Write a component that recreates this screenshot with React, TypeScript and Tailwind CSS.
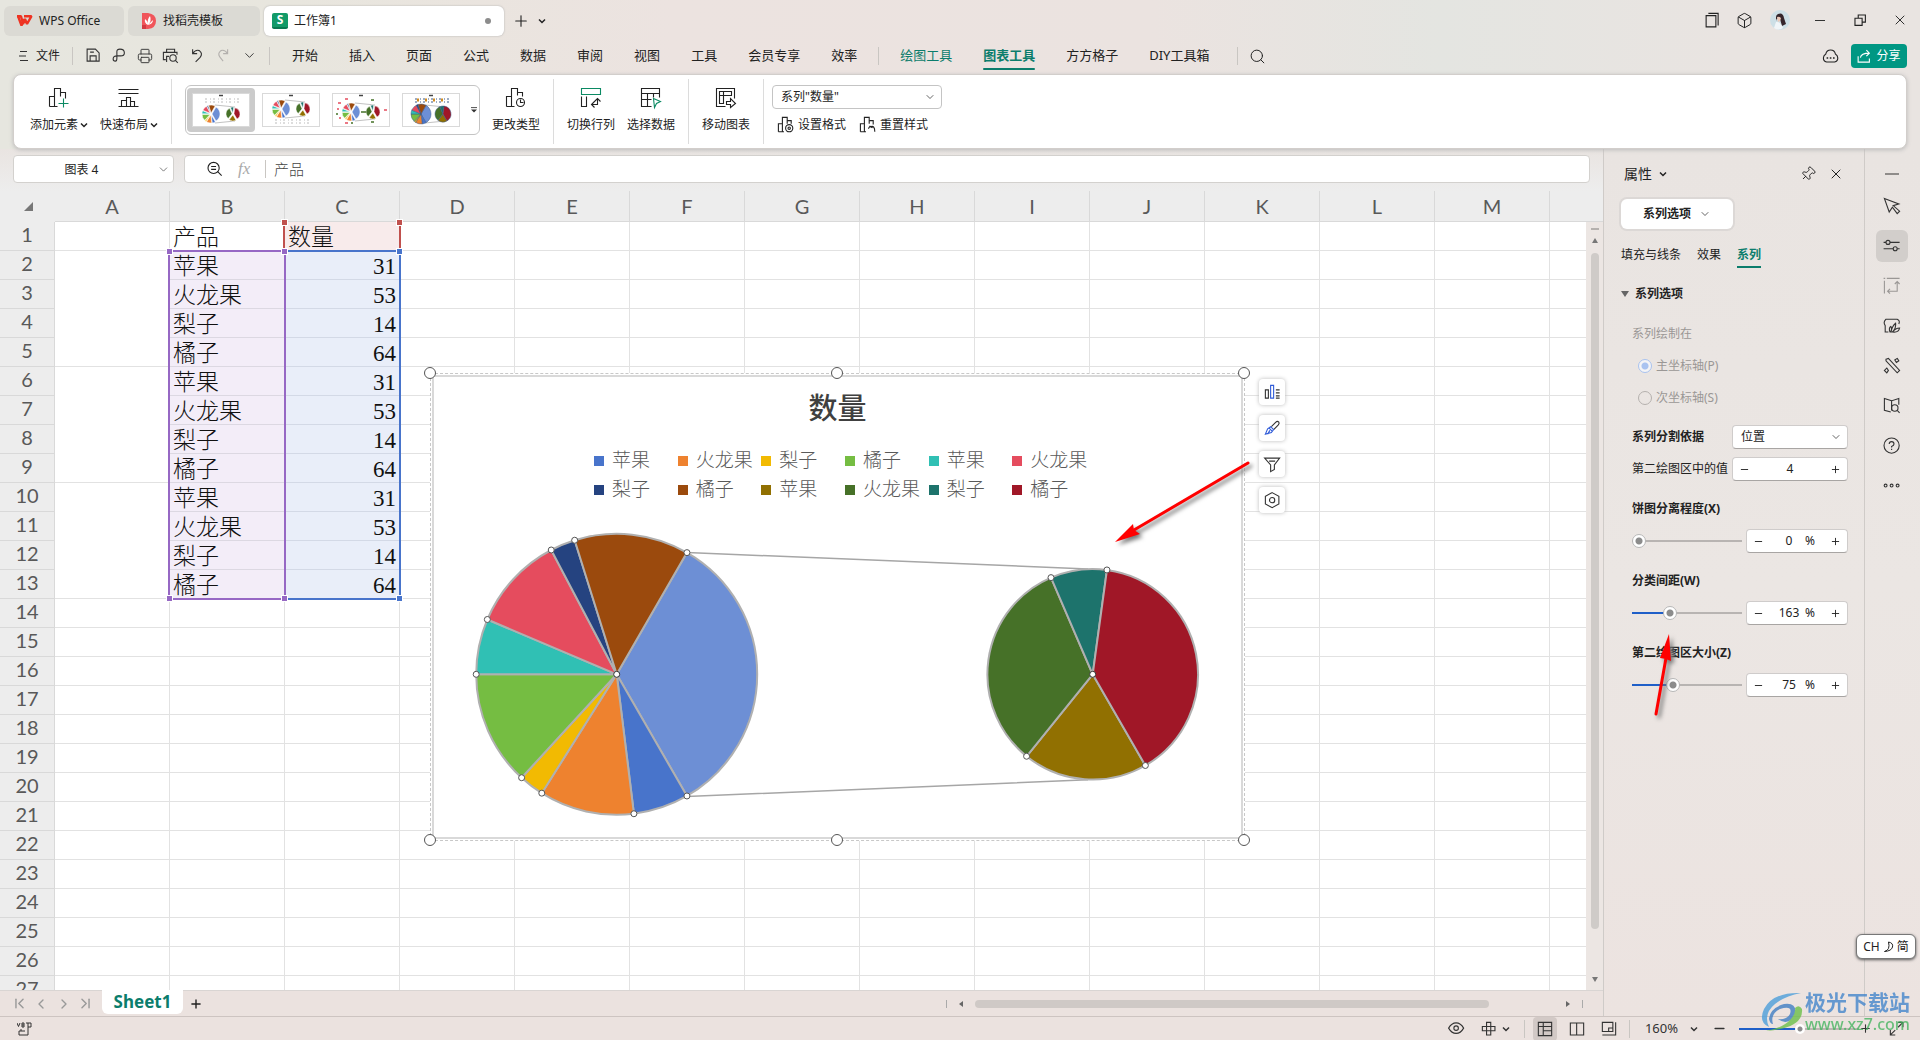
import type { ReactNode } from "react";
import { Box, Printer, Search, Pin, X, Minus, Plus, ChevronDown, ChevronLeft, ChevronRight, ChevronFirst, ChevronLast } from "lucide-react";

interface SliceProps {
    value: number,
    color: string,
}

interface SliderProps {
    id: string,
    label: string,
    value: number,
    min: number,
    max: number,
}

const products = ['苹果', '火龙果', '梨子', '橘子'];
const amounts = [31, 53, 14, 64];
const columns = ['A', 'B', 'C', 'D', 'E', 'F', 'G', 'H', 'I', 'J', 'K', 'L', 'M', ''];
const palette = ['#4874cb', '#ee822f', '#f2ba02', '#75bd42', '#30c0b4', '#e54c5e', '#254380', '#9b4a0d', '#917001', '#467128', '#1d736c', '#a01727'];

const mainSlices: SliceProps[] = [
    { value: 162, color: '#6d8fd5' },
    ...palette.slice(0, 8).map((color, i) => ({ value: amounts[i % 4], color })),
];
const secondSlices: SliceProps[] = palette.slice(8).map((color, i) => ({ value: amounts[i], color }));

const point = (cx: number, cy: number, r: number, deg: number) => {
    const a = (deg - 90) * Math.PI / 180;
    return [cx + r * Math.cos(a), cy + r * Math.sin(a)];
}

const Pie = ({ cx, cy, r, start, slices, line, dots, explode = 0 }: { cx: number, cy: number, r: number, start: number, slices: SliceProps[], line: string, dots?: boolean, explode?: number }) => {
    const total = slices.reduce((sum, el) => sum + el.value, 0);
    let angle = start;
    const parts = slices.map((el) => {
        const from = angle;
        angle += el.value / total * 360;
        const mid = point(0, 0, explode, (from + angle) / 2);
        return { color: el.color, mid, a: point(cx, cy, r, from), b: point(cx, cy, r, angle), big: angle - from > 180 ? 1 : 0 };
    });

    return (
        <g>
            {parts.map((p, i) => (
                <path key={i} fill={p.color} stroke={line} strokeWidth={dots ? 2 : 0.5} transform={`translate(${p.mid[0]} ${p.mid[1]})`}
                    d={`M${cx} ${cy}L${p.a[0]} ${p.a[1]}A${r} ${r} 0 ${p.big} 1 ${p.b[0]} ${p.b[1]}Z`} />
            ))}
            {dots && parts.map((p, i) => <circle key={i} cx={p.a[0]} cy={p.a[1]} r="3" fill="#fff" stroke="#555" />)}
            {dots && <circle cx={cx} cy={cy} r="3" fill="#fff" stroke="#333" />}
        </g>
    )
}

const Icon = ({ size = 20, children }: { size?: number, children: ReactNode }) => (
    <svg width={size} height={size} viewBox="0.5 0.5 20 20" fill="none" stroke="currentColor" strokeWidth={22 / size} className="shrink-0 overflow-visible">
        {children}
    </svg>
)

const Bars = () => <path d="M1 19V9H6M6 19V1H12V9M1 19H8" />

const Caret = ({ className = "" }: { className?: string }) => (
    <svg width="8" height="6" viewBox="0 0 8 6" fill="none" stroke="currentColor" strokeWidth="1.5" className={className}>
        <path d="M1 1.5L4 4.5L7 1.5" />
    </svg>
)

const TitleBar = () => {
    return (
        <div className="h-[38px] pt-1.5 pl-1 flex shrink-0 items-start text-xs">
            <button className="w-[120px] h-[30px] mr-1 pl-3 rounded-md bg-[#dbdad4] flex items-center gap-1.5">
                <svg width="17" height="12" viewBox="0 0 17 12" fill="none" stroke="#ee3322" strokeWidth="2.4" strokeLinejoin="bevel">
                    <path d="M1 1.2H5L7 9L9 4L11 9L15.5 1.2H8" /><path d="M2 1L5.5 10.5L8 4" />
                </svg>
                WPS Office
            </button>
            <button className="w-[132px] h-[30px] mr-1 pl-[13px] rounded-md bg-[#dbdad4] flex items-center gap-[7px]">
                <svg width="15" height="16" viewBox="0 0 15 16">
                    <path d="M1 0H7Q15 1 15 8T7 16H1Z" fill="#f0555a" /><path d="M1 12H5V16H1Z" fill="#d23a42" />
                    <path d="M7 12Q3 10 4 6Q7 8 7 12Q6 6 9 3Q11 8 7 12Q12 11 12 7" fill="#fff" />
                </svg>
                找稻壳模板
            </button>
            <button className="w-60 h-[30px] pl-2 pr-[13px] rounded-md bg-white shadow-[0_0_2px_#aaa] flex items-center gap-1.5">
                <span className="w-4 h-4 rounded-xs bg-[#129a68] border-b-2 border-[#0a7850] text-white text-xs leading-[14px] font-bold">S</span>
                工作簿1
                <span className="ml-auto w-1.5 h-1.5 rounded-full bg-[#8c8c8c]" />
            </button>
            <button aria-label="新建" className="h-[30px] ml-2 w-4"><Plus size={18} strokeWidth={1.5} /></button>
            <button aria-label="更多标签" className="h-[30px] ml-2.5 w-4"><Caret /></button>
            <div className="ml-auto h-7 flex items-center">
                <button aria-label="窗口" className="w-8 flex justify-center"><Icon size={15}><path d="M2 4H15V19H2ZM5 1H18V17" /></Icon></button>
                <button aria-label="应用" className="w-8 flex justify-center"><Box size={17} strokeWidth={1.4} /></button>
                <button aria-label="账户" className="w-10 flex justify-center">
                    <svg width="20" height="20" viewBox="0 0 20 20">
                        <circle cx="10" cy="10" r="10" fill="#cddfe6" />
                        <path d="M8 4Q13 2 14 8L16 14L12 16L10 9L8 8Q6 9 6 11L6 7Q6 5 8 4Z" fill="#35262c" />
                        <path d="M7 7Q9 6 11 8L10 11L8 12Z" fill="#eac8b8" /><path d="M6 12Q10 11 13 18Q8 21 4 18Z" fill="#f0f5f8" />
                    </svg>
                </button>
                <button aria-label="最小化" className="w-10 flex justify-center"><span className="w-2.5 h-px bg-[#333]" /></button>
                <button aria-label="还原" className="w-10 flex justify-center"><Icon size={13}><path d="M2 7H13V18H2ZM7 7V2H18V13H13" /></Icon></button>
                <button aria-label="关闭" className="w-10 flex justify-center"><X size={16} strokeWidth={1.4} /></button>
            </div>
        </div>
    )
}

const Sep = () => <span className="w-px h-[18px] bg-[#c9c6c2]" />

const MenuBar = () => {
    const tabs = ['开始', '插入', '页面', '公式', '数据', '审阅', '视图', '工具', '会员专享', '效率'];

    return (
        <nav className="h-9 pr-[13px] flex shrink-0 items-center text-[13px]">
            <button className="pl-[19px] pr-3 flex items-center gap-2 text-xs">
                <svg width="9" height="12" viewBox="0 0 9 12" stroke="#333"><path d="M1 1.5H8M0 6H7M1 10.5H9" /></svg>
                文件
            </button>
            <Sep />
            <div className="ml-[7px] mr-[7px] flex text-[#333]">
                <button aria-label="保存" className="w-[26px] flex justify-center"><Icon size={15}><path d="M2 2H13L18 7V18H2ZM6 18V11H14V18M6 6H11" /></Icon></button>
                <button aria-label="输出" className="w-[26px] flex justify-center"><Icon size={15}><path d="M7 14V5Q7 2 11 2Q17 2 17 7Q17 11 12 11H7Q2 11 2 15Q2 18 5 18Q7 18 7 14" /></Icon></button>
                <button aria-label="打印" className="w-[26px] flex justify-center"><Printer size={16} strokeWidth={1.4} /></button>
                <button aria-label="打印预览" className="w-[26px] flex justify-center"><Icon size={16}><path d="M5 6V2H15V6M4 15H1V6H18V9M5 18V11H8" /><circle cx="13" cy="13" r="4" /><path d="M16 16L19 19" /></Icon></button>
                <button aria-label="撤销" className="w-[26px] flex justify-center"><Icon size={15}><path d="M4 2V8H10M4 8Q8 2 13 4Q18 8 14 13L8 19" /></Icon></button>
                <button aria-label="恢复" className="w-[26px] flex justify-center text-[#b3b0ad]"><Icon size={15}><path d="M16 2V8H10M16 8Q12 2 7 4Q2 8 6 13L10 18" /></Icon></button>
                <button aria-label="更多" className="w-[26px] flex justify-center"><ChevronDown size={15} strokeWidth={1.5} /></button>
            </div>
            <Sep />
            <div className="ml-[22px] mr-[21px] flex gap-[31px]">
                {tabs.map((el) => <button key={el}>{el}</button>)}
            </div>
            <Sep />
            <div className="ml-[21px] mr-7 flex gap-[31px] text-[#222]">
                <button className="text-[#0b7d6c]">绘图工具</button>
                <button className="relative font-bold text-[#0b7d6c]">图表工具<span className="absolute left-0 -bottom-1 w-full h-0.5 rounded bg-[#0b7d6c]" /></button>
                <button>方方格子</button>
                <button>DIY工具箱</button>
            </div>
            <Sep />
            <button aria-label="搜索" className="ml-[11px]"><Search size={17} strokeWidth={1.4} /></button>
            <button aria-label="云" className="ml-auto mr-3">
                <Icon size={16}><path d="M5 18Q1 17 1 13Q1 10 4 8Q5 3 10 3Q15 3 16 8Q19 10 19 13Q19 17 15 18Z" /><path d="M5 13H7M9 13H11M13 13H15" strokeWidth="2" /></Icon>
            </button>
            <button className="w-14 h-6 rounded bg-[#009783] text-white text-xs flex items-center justify-center gap-1">
                <Icon size={15}><path d="M2 10V18H17V13M5 12Q6 6 17 6M13 2L17 6L13 10" /></Icon>
                分享
            </button>
        </nav>
    )
}

const RibbonButton = ({ label, caret, children }: { label: string, caret?: boolean, children: ReactNode }) => {
    return (
        <button className="pt-[13px] flex flex-col items-center gap-2 text-xs leading-[18px]">
            <Icon>{children}</Icon>
            <span className="flex items-center whitespace-nowrap">{label}{caret && <Caret className="ml-0.5" />}</span>
        </button>
    )
}

const RibbonLine = () => <span className="mx-px my-1 w-px self-stretch bg-[#dcdcdc]" />

const Thumb = ({ kind }: { kind: number }) => {
    const labelY = kind === 1 ? 25 : 4;
    const line = kind === 3 ? '#3a5a8a' : '#fff';
    const dy = kind === 1 ? -2 : kind === 2 ? 1 : 3;
    return (
        <button aria-label={`样式${kind + 1}`} className={`w-[68px] h-11 flex items-center justify-center rounded ${kind === 0 ? 'bg-[#cbcbcb]' : ''}`}>
            <svg width="56" height="32" viewBox="0 0 56 32" className="bg-white outline outline-[#d9d9d9]">
                <path d="M26 1.5H30" stroke="#444" strokeWidth="1.5" />
                {kind !== 2 && <path d={`M12 ${labelY + 1}H46M12 ${labelY + 4}H46`} stroke={kind === 3 ? '#3a5a8a' : '#bbb'} strokeWidth="1.2" strokeDasharray="2 3 1 2" />}
                {kind === 3 && <path d="M14 6H44" stroke="#d08a20" strokeWidth="3" strokeDasharray="2 6" />}
                <path d={`M22 ${8 + dy}L42 ${10 + dy}M22 ${26 + dy}L42 ${24 + dy}`} stroke="#999" strokeWidth="0.6" />
                <Pie cx={18} cy={17 + dy} r={kind === 3 ? 10 : 8} start={30} slices={mainSlices} line={line} explode={kind === 3 ? 0 : 1} />
                <Pie cx={40} cy={17 + dy} r={kind === 3 ? 8 : 6} start={150} slices={secondSlices} line={line} explode={kind === 3 ? 0 : 1} />
                {kind === 2 && <path d="M5 9H8M4 15H6M6 24H8M12 29H15M12 5H15M51 16H54" stroke="#e54c5e" strokeWidth="1.5" />}
                {kind === 2 && <path d="M3 20H5M28 18H33M18 29H20M38 6H41M38 28H41" stroke="#467128" strokeWidth="1.5" />}
            </svg>
        </button>
    )
}

const Ribbon = () => {
    return (
        <section className="relative z-10 h-[75px] mx-[13px] pl-4 flex shrink-0 rounded-lg bg-white border border-[#d2cecb] shadow-[0_1px_4px_#bbb] text-[#222]">
            <div className="flex gap-3">
                <RibbonButton label="添加元素" caret><path d="M1 19V9H6M6 19V1H12V9M12 5H17V11M1 19H9" /><path d="M15 11V20M10 16H20" stroke="#0b8a63" /></RibbonButton>
                <RibbonButton label="快速布局" caret><path d="M0 2H20M0 6H20M0 19H20M3 19V13H8M8 19V10H12V19M12 14H16V19" /></RibbonButton>
                <RibbonLine />
                <div className="mt-2.5 w-[295px] h-[50px] pl-px flex items-center gap-0.5 rounded-md border border-[#c4c4c4]">
                    <Thumb kind={0} />
                    <Thumb kind={1} />
                    <Thumb kind={2} />
                    <Thumb kind={3} />
                    <button aria-label="更多样式" className="ml-1">
                        <svg width="6" height="6" viewBox="0 0 7 7"><path d="M0 .7H7" stroke="#333" /><path d="M0 3H7L3.500 6.500Z" fill="#333" /></svg>
                    </button>
                </div>
                <RibbonButton label="更改类型"><path d="M1 19V9H6M6 19V1H12V8M12 5H17V9M1 19H9" /><circle cx="15" cy="15" r="4" /><path d="M15 12V15H18" /></RibbonButton>
                <RibbonLine />
                <RibbonButton label="切换行列"><path d="M1 1H20V7H1Z" stroke="#0b8a63" /><path d="M1 9V19H6V9M11 17H17V11M14 14L17 11L20 14M14 14L11 17L14 20" /></RibbonButton>
                <RibbonButton label="选择数据"><path d="M11 19H1V1H19V10M1 6H19M1 12H11M7 6V19M13 6V10" /><path d="M13 11L20 14L16 16L14 20Z" stroke="#0b8a63" /></RibbonButton>
                <RibbonLine />
                <RibbonButton label="移动图表"><path d="M10 19H1V1H19V11M4 4H16V8H4ZM4 8V16H8V4M11 14H15V11L20 16L15 20V17H11Z" /></RibbonButton>
            </div>
            <span className="ml-[13px] my-1 w-px bg-[#dcdcdc]" />
            <div className="ml-2 pt-2.5 text-xs">
                <div className="relative">
                    <select aria-label="图表元素" className="w-[170px] h-6 pl-2 appearance-none rounded border border-[#c4c4c4] bg-white">
                        <option>系列"数量"</option>
                    </select>
                    <ChevronDown size={12} strokeWidth={1.4} className="absolute right-1.5 top-1.5" />
                </div>
                <div className="mt-2 pl-1.5 flex gap-3.5">
                    <button className="flex items-center gap-1"><Icon size={16}><Bars /><path d="M12 5H17V9" /><circle cx="14.500" cy="14.500" r="4.500" /><circle cx="14.500" cy="14.500" r="1.500" /></Icon>设置格式</button>
                    <button className="flex items-center gap-1"><Icon size={16}><Bars /><path d="M12 5H17V10M11 15L13 12L16 14M13 13Q19 10 19 19" /></Icon>重置样式</button>
                </div>
            </div>
        </section>
    )
}

const FormulaBar = () => {
    return (
        <div className="h-[42px] pb-0.5 px-[13px] flex items-center gap-2.5 shrink-0 bg-linear-to-b from-transparent to-[#ededed]">
            <div className="relative">
                <input aria-label="名称框" defaultValue="图表 4" className="w-[161px] h-7 pr-6 rounded border border-[#d3d1ce] bg-white text-center text-xs" />
                <ChevronDown size={13} strokeWidth={1.4} className="absolute right-1 top-2 text-[#555]" />
            </div>
            <div className="flex-1 h-7 pl-[23px] flex items-center rounded border border-[#d3d1ce] bg-white">
                <Icon size={14}><circle cx="8.500" cy="9" r="8" /><path d="M5 7H12M5 11H12M14 14L20 20" /></Icon>
                <span className="w-[43px] pl-4 font-['Liberation_Serif'] italic text-[17px] leading-7 text-[#aaa]">fx</span>
                <Sep />
                <input aria-label="编辑栏" defaultValue="产品" className="ml-2 flex-1 text-[15px] font-light text-[#444] leading-6" />
            </div>
        </div>
    )
}

const handles = [
    "-left-[7px] -top-[7px]", "left-[400px] -top-[7px]", "-right-1.5 -top-[7px]",
    "-left-[7px] -bottom-1.5", "left-[400px] -bottom-1.5", "-right-1.5 -bottom-1.5",
];

const Chart = () => {
    return (
        <div className="absolute left-[430px] top-[182px] w-[815px] h-[468px] border border-dashed border-[#c8c8c8] bg-white">
            <div className="absolute inset-[1px] border-2 border-[#d9d9d9]" />
            <div className="relative pt-3 text-center text-[29px] leading-[44px] font-medium text-[#404040]">数量</div>
            <div className="relative mt-4 ml-[163px] w-[502px] grid grid-cols-6 text-[19px] leading-[29px] font-light text-[#595959] whitespace-nowrap">
                {palette.map((color, i) => (
                    <span key={color} className="flex items-center gap-2">
                        <i className="w-2.5 h-2.5 shrink-0" style={{ backgroundColor: color }} />
                        {products[i % 4]}
                    </span>
                ))}
            </div>
            <svg width="813" height="466" viewBox="431 374 813 466" className="absolute left-0 top-0">
                <path d="M687 552.500L1088 569M687 796.500L1088 779.800" stroke="#a6a6a6" strokeWidth="1.500" />
                <Pie cx={616.7} cy={674.3} r={140.5} start={30} slices={mainSlices} line="#b0b0b0" dots />
                <Pie cx={1092.7} cy={674.3} r={105.3} start={150} slices={secondSlices} line="#b0b0b0" dots />
            </svg>
            {handles.map((el) => <i key={el} className={`absolute w-3 h-3 rounded-full border border-[#555] bg-white ${el}`} />)}
            <div className="absolute left-[828px] top-[5px] flex flex-col gap-2.5 text-[#333]">
                {[
                    <g><path d="M1 7H5V18H1ZM15 7H20M15 11H20M15 15H20M15 18H20" /><path d="M8 1H12V18H8Z" stroke="#2f5bd8" /></g>,
                    <g><path d="M9 8L15 2Q17 0 19 2Q20 4 18 6L12 12" /><path d="M1 18L4 11L8 8L12 12L9 16ZM6 10L10 14M4 18L7 13" stroke="#2f5bd8" /></g>,
                    <g><path d="M0 2H20L13 11V17L8 20V11ZM6 6H14" /></g>,
                    <g><path d="M10 0L19 5V15L10 20L1 15V5Z" /><circle cx="10" cy="10" r="3.500" /></g>,
                ].map((el, i) => (
                    <button key={i} aria-label={`图表按钮${i + 1}`} className="w-[26px] h-[26px] flex items-center justify-center rounded bg-white shadow-[0_0_4px_#bbb]"><Icon size={15}>{el}</Icon></button>
                ))}
            </div>
        </div>
    )
}

const Corner = ({ className }: { className: string }) => <i className={`absolute w-[7px] h-[7px] border border-white ${className}`} />

const Sheet = () => {
    return (
        <div className="relative flex-1 min-h-0 flex overflow-hidden bg-white">
            <div className="relative flex-1 min-w-0 overflow-hidden">
                <table className="w-[1665px] table-fixed border-separate border-spacing-0 text-[#111]">
                    <thead>
                        <tr className="h-[31px] bg-[#ededed] font-[Lato] text-xl text-[#595959]">
                            <th className="w-[55px] p-0 border-b border-[#ededed]">
                                <svg width="9" height="9" viewBox="0 0 9 9" className="ml-6"><path d="M9 0V9H0Z" fill="#777" /></svg>
                            </th>
                            {columns.map((el, i) => <th key={i} className="w-[115px] p-0 font-normal leading-7 border-b border-r border-[#d9d9d9]">{el}</th>)}
                        </tr>
                    </thead>
                    <tbody>
                        {Array.from({ length: 27 }, (_, r) => (
                            <tr key={r} className="h-[29px]">
                                <th className="p-0 bg-[#ededed] border-b border-r border-[#d9d9d9] font-[Lato] font-normal text-xl leading-6 align-top text-[#595959]">{r + 1}</th>
                                {columns.map((_, c) => {
                                    const inData = r > 0 && r < 13;
                                    if (c === 0 && inData) {
                                        return r % 4 === 1 ? <td key={c} rowSpan={4} className="border-b border-r border-[#e2e2e2]" /> : null;
                                    }
                                    if (c === 1 && r < 13) {
                                        return <td key={c} className={`px-[3px] py-0 border-b border-r border-[#dcd8e2] font-light text-[23px] leading-7 ${inData ? 'bg-[#f3edf8]' : ''}`}>{inData ? products[(r - 1) % 4] : '产品'}</td>;
                                    }
                                    if (c === 2 && r < 13) {
                                        return inData
                                            ? <td key={c} className="px-[3px] pt-1 pb-0 border-b border-r border-[#d3d9e6] bg-[#e9eef9] text-right font-['Liberation_Serif'] text-[23px] leading-6">{amounts[(r - 1) % 4]}</td>
                                            : <td key={c} className="px-[3px] py-0 border-b border-r border-[#e2e2e2] bg-[#f8ebeb] font-light text-[23px] leading-7">数量</td>;
                                    }
                                    return <td key={c} className="p-0 border-b border-r border-[#e2e2e2]" />;
                                })}
                            </tr>
                        ))}
                    </tbody>
                </table>
                {/* source ranges of the selected series */}
                <div className="absolute left-[283px] top-8 w-[118px] h-7 border-x-2 border-[#c0504d]" />
                <div className="absolute left-[284px] top-[59px] w-[117px] h-[350px] border-2 border-[#4874cb]" />
                <div className="absolute left-[168px] top-[59px] w-[118px] h-[350px] border-2 border-[#9668c4]" />
                <Corner className="left-[281px] top-7 bg-[#c0504d]" />
                <Corner className="left-[396px] top-7 bg-[#c0504d]" />
                <Corner className="left-[166px] top-[57px] bg-[#9668c4]" />
                <Corner className="left-[281px] top-[57px] bg-[#9668c4]" />
                <Corner className="left-[396px] top-[57px] bg-[#4874cb]" />
                <Corner className="left-[166px] top-[404px] bg-[#9668c4]" />
                <Corner className="left-[281px] top-[404px] bg-[#9668c4]" />
                <Corner className="left-[396px] top-[404px] bg-[#4874cb]" />
                <Chart />
            </div>
            <div className="w-[17px] flex flex-col items-center bg-[#ece6e3]">
                <div className="w-full h-[31px] bg-[#ededed] border-b border-[#d9d9d9]" />
                <span className="mt-1.5 w-2 h-0.5 bg-[#b5b1ae]" />
                <span className="mt-2 border-x-[3px] border-x-transparent border-b-[5px] border-b-[#777]" />
                <span className="mt-2.5 w-2 flex-1 rounded bg-[#cfcbc8]" />
                <span className="mt-12 mb-2 border-x-[3px] border-x-transparent border-t-[5px] border-t-[#777]" />
            </div>
        </div>
    )
}

const SheetTabs = () => {
    return (
        <div className="h-[26px] flex shrink-0 border-t border-[#d9d5d3] bg-[#ebe2df]">
            <div className="w-[102px] pl-[11px] flex items-center text-[#999]">
                <button aria-label="第一个" className="w-[22px]"><ChevronFirst size={17} strokeWidth={2} /></button>
                <button aria-label="上一个" className="w-[23px]"><ChevronLeft size={16} strokeWidth={2} /></button>
                <button aria-label="下一个" className="w-[21px]"><ChevronRight size={16} strokeWidth={2} /></button>
                <button aria-label="最后一个" className="w-[18px]"><ChevronLast size={17} strokeWidth={2} /></button>
            </div>
            <button className="w-[81px] h-6 -mt-px rounded-b-md bg-white text-[17px] leading-6 font-bold text-[#0b7d6c]">Sheet1</button>
            <button aria-label="新建工作表" className="ml-0.5 px-1"><Plus size={14} strokeWidth={2.4} /></button>
            <div className="ml-auto w-[657px] pr-5 flex items-center">
                <span className="w-px h-2 bg-[#aaa]" />
                <span className="mx-3 border-y-[3px] border-y-transparent border-r-[4px] border-r-[#666]" />
                <span className="w-[514px] h-2 rounded bg-[#cfc9c6]" />
                <span className="ml-auto border-y-[3px] border-y-transparent border-l-[4px] border-l-[#666]" />
                <span className="ml-3 w-px h-2 bg-[#aaa]" />
            </div>
        </div>
    )
}

const box = "h-6 rounded border border-[#cfcccb] border-b-[#a8a5a3] bg-white";

const Stepper = ({ id, label, value, unit }: { id?: string, label?: string, value: number, unit?: string }) => {
    return (
        <div className={`${box} ${unit ? 'w-[102px]' : 'w-[116px]'} px-1.5 flex items-center justify-between text-xs`}>
            <button aria-label="减少"><Minus size={11} strokeWidth={2} /></button>
            <span className="flex items-center">
                <input id={id} aria-label={label} defaultValue={value} className="w-[26px] text-center" />
                {unit && <span className="w-4 text-center">{unit}</span>}
            </span>
            <button aria-label="增加"><Plus size={11} strokeWidth={2} /></button>
        </div>
    )
}

const SliderField = ({ id, label, value, min, max }: SliderProps) => {
    const done = (value - min) / (max - min) * 100;

    return (
        <div className="mt-[18px]">
            <label htmlFor={id} className="block leading-5 font-bold">{label}</label>
            <div className="mt-2.5 flex items-center justify-between">
                <input id={id} type="range" min={min} max={max} defaultValue={value}
                    className="w-[110px] h-3.5 appearance-none bg-no-repeat bg-center bg-[length:100%_2px] [&::-webkit-slider-thumb]:appearance-none [&::-webkit-slider-thumb]:w-3.5 [&::-webkit-slider-thumb]:h-3.5 [&::-webkit-slider-thumb]:rounded-full [&::-webkit-slider-thumb]:border [&::-webkit-slider-thumb]:border-[#b8b8b8] [&::-webkit-slider-thumb]:bg-[radial-gradient(circle,#8c8c8c_3px,#fff_4px)]"
                    style={{ backgroundImage: `linear-gradient(90deg, #1f5fc8 ${done}%, #b8b4b2 ${done}%)` }} />
                <Stepper label={label} value={value} unit="%" />
            </div>
        </div>
    )
}

const Panel = () => {
    return (
        <aside className="w-[261px] pl-[17px] pr-4 shrink-0 border-l border-[#cfcbc8] text-xs text-[#222]">
            <div className="h-[50px] pl-[3px] flex items-center">
                <button className="flex items-center gap-[7px] text-sm">属性<Caret /></button>
                <button aria-label="固定" className="ml-auto"><Pin size={16} strokeWidth={1.4} className="rotate-45" /></button>
                <button aria-label="关闭面板" className="ml-3 mr-1"><X size={16} strokeWidth={1.5} /></button>
            </div>
            <button className="w-28 h-[30px] flex items-center justify-center gap-2 rounded-md bg-white shadow-[0_0_0_2px_#dcd8d6] font-semibold">
                系列选项<ChevronDown size={12} strokeWidth={1.4} />
            </button>
            <div className="mt-4 flex gap-4 leading-5">
                <button>填充与线条</button>
                <button>效果</button>
                <button className="relative font-bold text-[#0b7d6c]">系列<span className="absolute left-0 -bottom-[3px] w-full h-0.5 bg-[#0b7d6c]" /></button>
            </div>
            <button className="mt-[19px] mb-px flex items-center gap-1.5 leading-5 font-bold">
                <span className="border-x-[4px] border-x-transparent border-t-[6px] border-t-[#666]" />系列选项
            </button>
            <fieldset disabled className="mt-5 pl-[11px] text-[#9a9795]">
                <legend className="leading-5">系列绘制在</legend>
                <label className="mt-3 pl-1.5 flex items-center gap-1 leading-5">
                    <input type="radio" name="axis" defaultChecked className="w-3.5 h-3.5 appearance-none rounded-full border border-[#a9c3f0] bg-[radial-gradient(circle,#a9c3f0_3px,#f4f4f6_4px)]" />主坐标轴(P)
                </label>
                <label className="mt-3 pl-1.5 flex items-center gap-1 leading-5">
                    <input type="radio" name="axis" className="w-3.5 h-3.5 appearance-none rounded-full border border-[#b5b1ae]" />次坐标轴(S)
                </label>
            </fieldset>
            <div className="mt-[17px] pl-[11px]">
                <div className="flex items-center justify-between">
                    <label htmlFor="split" className="font-bold">系列分割依据</label>
                    <div className="relative">
                        <select id="split" className={`${box} w-[116px] pl-2 appearance-none`}><option>位置</option></select>
                        <ChevronDown size={12} strokeWidth={1.4} className="absolute right-1.5 top-1.5" />
                    </div>
                </div>
                <div className="mt-2 flex items-center justify-between">
                    <label htmlFor="second">第二绘图区中的值</label>
                    <Stepper id="second" value={4} />
                </div>
                <SliderField id="explode" label="饼图分离程度(X)" value={0} min={0} max={400} />
                <SliderField id="gap" label="分类间距(W)" value={163} min={0} max={500} />
                <SliderField id="size" label="第二绘图区大小(Z)" value={75} min={5} max={200} />
            </div>
        </aside>
    )
}

const SideBar = () => {
    const tools = [
        <path d="M1 1L19 8L12 10L20 17L17 20L11 12L7 18Z" />,
        <g><path d="M0 6H3M8 6H20M0 14H12M17 14H20" /><circle cx="5.500" cy="6" r="2.500" /><circle cx="14.500" cy="14" r="2.500" /></g>,
        <path d="M1 4V20M0 1H2M4 1H20M5 17H17V5M14 8L17 5L20 8M8 14L5 17L8 20" />,
        <path d="M6 18H2V10Q-1 6 3 2H17Q21 4 19 8M8 18Q6 13 9 11Q11 14 9 18Q11 10 15 7Q16 13 11 18Q15 13 20 13Q19 19 11 18Z" />,
        <path d="M3 2L6 1L20 16L17 19L3 4ZM17 1L19 4L16 6L14 3ZM4 13L6 16L4 19L1 16Z" />,
        <g><path d="M10 4L1 1V16L9 18M10 16V4L19 1V9" /><circle cx="14" cy="13" r="4" /><path d="M17 16L20 19" /></g>,
        <g><circle cx="10" cy="10" r="9.500" /><path d="M7 8Q7 5 10 5T13 8Q13 10 10 11V12.500M10 14V15.500" /></g>,
        <g><circle cx="2.500" cy="10" r="1.800" /><circle cx="10" cy="10" r="1.800" /><circle cx="17.500" cy="10" r="1.800" /></g>,
    ];

    return (
        <div className="w-14 pr-0.5 shrink-0 border-l border-[#cfcbc8] flex flex-col items-center text-[#333]">
            <span className="mt-6 mb-[15px] w-3.5 h-0.5 bg-[#8f8c8a]" />
            {tools.map((el, i) => (
                <button key={i} aria-label={`工具${i + 1}`} className={`w-8 h-8 mb-2 flex items-center justify-center rounded-md ${i === 1 ? 'bg-[#d2cecb]' : ''} ${i === 2 ? 'text-[#9a9795]' : ''}`}>
                    <Icon size={16}>{el}</Icon>
                </button>
            ))}
        </div>
    )
}

const StatusBar = () => {
    return (
        <footer className="h-6 px-4 shrink-0 flex items-center border-t border-[#cdc4c1] text-[13px] text-[#333]">
            <svg width="15" height="14" viewBox="0 0 15 14" fill="none" stroke="currentColor" className="ml-px">
                <path d="M0 1L1.500 4.500L3 1M5 1V5H7V1ZM5 3H7M9 1H14V5H11V13H2V9H8M11 5V1M4 7V9" />
            </svg>
            <button aria-label="护眼" className="ml-auto mr-[18px]"><Icon size={15}><path d="M0 10Q4 3 10 3T20 10Q16 17 10 17T0 10Z" /><circle cx="10" cy="10" r="3" /></Icon></button>
            <button aria-label="阅读" className="mr-[14px] flex items-center gap-1.5"><Icon size={14}><path d="M7 7V1H13V7H19V13H13V19H7V13H1V7ZM7 7H13V13H7Z" /></Icon><Caret /></button>
            <Sep />
            <button aria-label="普通" className="ml-2 w-6 h-6 flex items-center justify-center rounded bg-[#d2c9c6]"><Icon size={14}><path d="M1 1H20V20H1ZM1 7H20M8 1V20M8 13H20" /></Icon></button>
            <button aria-label="分页" className="ml-2 w-6 h-6 flex items-center justify-center"><Icon size={14}><path d="M1 2H20V19H1ZM10 2V19" /></Icon></button>
            <button aria-label="页面" className="ml-2 mr-2 w-6 h-6 flex items-center justify-center"><Icon size={14}><path d="M1 1H16V14H1ZM20 1V19H1M10 14V9H16" /></Icon></button>
            <Sep />
            <button className="ml-[15px] flex items-center gap-3">160%<Caret /></button>
            <button aria-label="缩小" className="ml-3.5"><Minus size={15} strokeWidth={2.4} /></button>
            <input type="range" aria-label="缩放" min={0} max={100} defaultValue={51}
                className="ml-3 w-[120px] h-2.5 appearance-none bg-no-repeat bg-center bg-[length:100%_2px] bg-[linear-gradient(90deg,#1f5fc8_50%,#bdb6b3_50%)] [&::-webkit-slider-thumb]:appearance-none [&::-webkit-slider-thumb]:w-2.5 [&::-webkit-slider-thumb]:h-2.5 [&::-webkit-slider-thumb]:rounded-full [&::-webkit-slider-thumb]:bg-[radial-gradient(circle,#8c8c8c_2px,#fff_3px)]" />
            <button aria-label="放大"><Plus size={13} strokeWidth={2} /></button>
            <button aria-label="全屏" className="ml-[18px]"><Icon size={14}><path d="M12 1H19V8M19 1L12 8M8 19H1V12M1 19L8 12" /></Icon></button>
        </footer>
    )
}

const Watermark = () => {
    return (
        <div className="absolute right-2.5 bottom-1.5 flex items-center gap-0.5 opacity-80 pointer-events-none">
            <svg width="42" height="40" viewBox="0 0 42 40">
                <path d="M40 1Q12 0 3 17Q-3 30 8 35Q2 22 14 12Q24 4 40 1Z" fill="#4d9fdb" />
                <path d="M12 32Q9 22 19 17Q32 13 29 22Q26 28 17 27Q26 34 34 24Q37 10 23 12Q9 16 8 27Q9 32 12 32Z" fill="#3f7fc4" />
                <path d="M41 17Q43 36 5 39Q22 36 30 27Q35 21 34 16Q38 12 41 17Z" fill="#6cc04a" />
            </svg>
            <div>
                <div className="text-[21px] leading-6 font-bold text-[#4486cc]">极光下载站</div>
                <div className="text-base leading-5 font-medium text-[#48b562]">www.xz7.com</div>
            </div>
        </div>
    )
}

const App = () => {
    return (
        <div className="relative h-screen flex flex-col overflow-hidden bg-[linear-gradient(90deg,#e6e6df_0%,#e8e6de_15%,#ece3e0_35%,#ebe3e0_60%,#e4e5e1_75%,#e9e4e1_90%,#e9e4e1_100%)] font-['Noto_Sans','Noto_Sans_CJK_SC',sans-serif] text-[#222]">
            <TitleBar />
            <MenuBar />
            <Ribbon />
            <main className="flex-1 min-h-0 flex bg-[linear-gradient(180deg,#e9e4e1,#ebe6e3_50%,#ece3e0)]">
                <div className="flex-1 min-w-0 flex flex-col">
                    <FormulaBar />
                    <Sheet />
                    <SheetTabs />
                </div>
                <Panel />
                <SideBar />
            </main>
            <div className="shrink-0 bg-[#ebe2df]"><StatusBar /></div>
            <svg width="150" height="100" viewBox="1110 450 150 100" className="absolute left-[1110px] top-[450px] pointer-events-none drop-shadow-[3px_3px_2px_#777]">
                <path d="M1248 463L1134 530" stroke="#f00" strokeWidth="3" strokeLinecap="round" /><path d="M1115 542L1133 524L1134 530L1140 534Z" fill="#f00" />
            </svg>
            <svg width="40" height="100" viewBox="1645 625 40 100" className="absolute right-[235px] top-[625px] pointer-events-none drop-shadow-[3px_3px_2px_#777]">
                <path d="M1656 714L1666 658" stroke="#f00" strokeWidth="3" strokeLinecap="round" /><path d="M1669 634L1660 658L1666 659L1671 661Z" fill="#f00" />
            </svg>
            <div className="absolute right-1 bottom-[81px] w-[60px] h-[25px] flex items-center justify-center gap-[3px] rounded-md border border-[#777] bg-white shadow-[0_1px_3px_#555] text-xs whitespace-nowrap">
                CH
                <svg width="11" height="12" viewBox="0 0 10 12" fill="none" stroke="#222"><path d="M5 1Q10 2 9 6T1 10.500Q7 9 5 1Z" /></svg>
                简
            </div>
            <Watermark />
        </div>
    )
}

export default App;
